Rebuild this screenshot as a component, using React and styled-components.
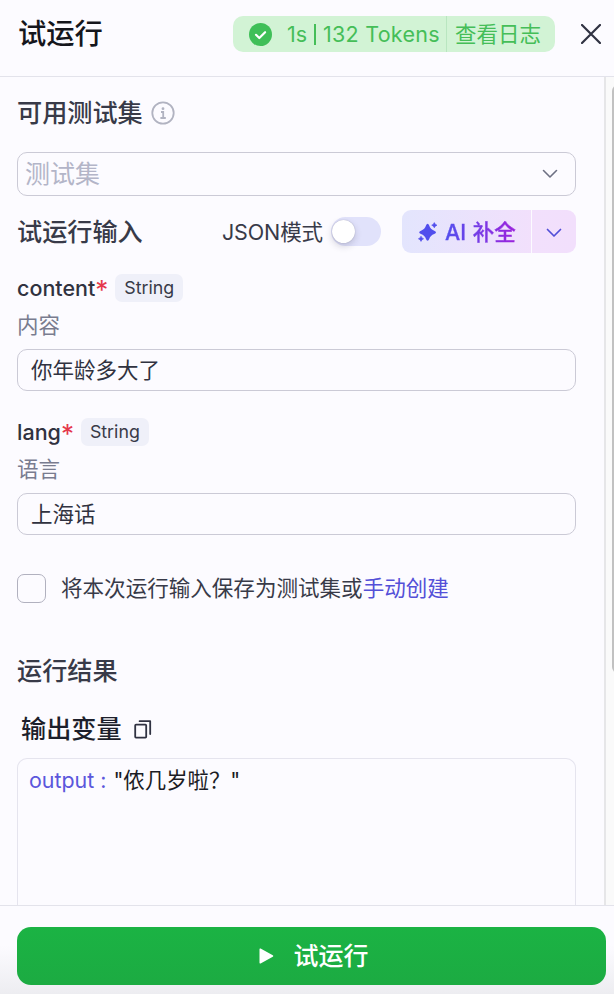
import React, { useState } from "react";
import styled, { createGlobalStyle } from "styled-components";

const GlobalStyle = createGlobalStyle`
  * {
    box-sizing: border-box;
  }
  body {
    margin: 0;
    background: #fcfbff;
    font-family: Inter, "Noto Sans CJK SC", sans-serif;
    color: #383a48;
  }
  button, input {
    font-family: inherit;
  }
`;

const Panel = styled.div`
  width: 614px;
  height: 994px;
  display: flex;
  flex-direction: column;
  overflow: hidden;
  background: #fcfbff;
`;

const Header = styled.header`
  height: 77px;
  flex-shrink: 0;
  display: flex;
  align-items: flex-start;
  padding: 16px 13px 0 18px;
  border-bottom: 1px solid #e3e3eb;
`;

const Title = styled.h1`
  margin: 0;
  flex: 1;
  font-size: 28.3px;
  line-height: 37px;
  font-weight: 500;
  color: #15161c;
`;

const Status = styled.div`
  width: 322px;
  height: 36px;
  display: flex;
  align-items: center;
  border-radius: 10px;
  background: #d2f3d5;
  color: #45be58;
  font-size: 21.5px;
  line-height: 36px;
  white-space: nowrap;
`;

const StatusInfo = styled.div`
  width: 214px;
  height: 36px;
  display: flex;
  align-items: center;
  padding-left: 16px;
  border-right: 1px solid #b9e6c0;
`;

const Duration = styled.span`
  margin-left: 15px;
`;

const Bar = styled.span`
  width: 2px;
  height: 21px;
  margin: 0 7px 0 7px;
  background: #45be58;
`;

const Tokens = styled.span`
  letter-spacing: 0.25px;
`;

const LogLink = styled.a`
  padding-left: 8px;
  cursor: pointer;
`;

const CloseButton = styled.button`
  display: flex;
  margin-left: 26px;
  padding: 8px 0 0;
  border: 0;
  background: none;
  cursor: pointer;
`;

const Body = styled.div`
  flex: 1;
  min-height: 0;
  display: flex;
`;

const Content = styled.main`
  flex: 1;
  display: flex;
  flex-direction: column;
  padding: 22px 28px 0 17px;
  overflow: hidden;
`;

const ScrollTrack = styled.div`
  width: 10px;
  padding: 8px 0 0 6px;
  border-left: 2px solid #e6e6e8;
  background: #fafafa;
  overflow: hidden;
`;

const ScrollThumb = styled.div`
  width: 12px;
  height: 588px;
  border-radius: 6px;
  background: #c1c1c1;
`;

const SectionTitle = styled.h2`
  display: flex;
  align-items: center;
  gap: ${(p) => p.$gap || 8}px;
  height: 28px;
  margin: ${(p) => p.$top || 0}px 0 0 ${(p) => p.$left || 0}px;
  flex-shrink: 0;
  font-size: 25.15px;
  line-height: 28px;
  font-weight: 500;
  color: ${(p) => p.$color || "#383a48"};
`;

const Select = styled.div`
  height: 44px;
  flex-shrink: 0;
  margin-top: 25px;
  padding: 0 17px 0 7px;
  display: flex;
  align-items: center;
  justify-content: space-between;
  border: 1px solid #cbcad6;
  border-radius: 10px;
  color: #b3b5c8;
  font-size: 25px;
  line-height: 41px;
`;

const InputBar = styled.div`
  height: 43px;
  flex-shrink: 0;
  margin-top: 14px;
  display: flex;
  align-items: center;
`;

const ModeLabel = styled.span`
  margin-left: auto;
  padding-bottom: 3px;
  font-size: 21.5px;
  letter-spacing: -0.1px;
`;

const Toggle = styled.button`
  width: 50px;
  height: 29px;
  margin: 0 21px 0 8px;
  padding: 0 2px 1px 1px;
  display: flex;
  align-items: center;
  justify-content: ${(p) => (p.$on ? "flex-end" : "flex-start")};
  border: 0;
  border-radius: 15px;
  background: ${(p) => (p.$on ? "#4d53e8" : "#e1e2fb")};
  cursor: pointer;
`;

const Knob = styled.span`
  width: 23px;
  height: 23px;
  border-radius: 50%;
  background: #fff;
  box-shadow: 0 3px 7px rgba(40, 40, 70, 0.2), 0 0 1px rgba(40, 40, 70, 0.4);
`;

const AiGroup = styled.div`
  width: 174px;
  height: 43px;
  display: flex;
  border-radius: 9px;
  background: linear-gradient(90deg, #e3e5fd 0%, #f2e0fc 75%, #f2dffc 100%);
`;

const AiButton = styled.button`
  width: 130px;
  display: flex;
  align-items: center;
  gap: 7px;
  padding: 0 0 0 16px;
  border: 0;
  border-right: 1px solid #fcfbff;
  background: none;
  cursor: pointer;
`;

const AiLabel = styled.span`
  font-size: 21.5px;
  font-weight: 500;
  line-height: 30px;
  word-spacing: 1px;
  white-space: nowrap;
  background: linear-gradient(90deg, #5450ee, #9b22dc);
  background-clip: text;
  color: transparent;
  -webkit-text-stroke: 0.3px transparent;
`;

const AiMore = styled.button`
  flex: 1;
  display: flex;
  align-items: center;
  justify-content: center;
  padding: 2px 1px 0 0;
  border: 0;
  background: none;
  cursor: pointer;
`;

const FieldHead = styled.div`
  height: 28px;
  flex-shrink: 0;
  margin-top: ${(p) => p.$top}px;
  display: flex;
  align-items: center;
`;

const FieldName = styled.label`
  font-size: 21.5px;
  line-height: 28px;
  font-weight: 500;
  color: #303240;
`;

const Required = styled.span`
  width: 12px;
  font-size: 26px;
  line-height: 28px;
  letter-spacing: -2px;
  padding-top: 3px;
  color: #e5384b;
`;

const TypeTag = styled.span`
  height: 28px;
  margin-left: 8px;
  padding: 0 9px;
  border-radius: 7px;
  background: #eff0f9;
  font-size: 17.8px;
  line-height: 27px;
`;

const FieldDesc = styled.div`
  height: 24px;
  flex-shrink: 0;
  margin-top: 11px;
  font-size: 21.5px;
  line-height: 24px;
  color: #797c8f;
`;

const TextInput = styled.input`
  width: 100%;
  height: 42px;
  flex-shrink: 0;
  margin-top: 12px;
  padding: 0 13px 3px;
  border: 1px solid #cbcad6;
  border-radius: 10px;
  outline: none;
  background: transparent;
  color: #303240;
  font-size: 21.5px;
`;

const SaveRow = styled.div`
  height: 29px;
  flex-shrink: 0;
  margin-top: 39px;
  display: flex;
  align-items: center;
  font-size: 21.55px;
  line-height: 26px;
  white-space: nowrap;
`;

const SaveText = styled.span`
  padding-bottom: 2px;
`;

const Checkbox = styled.input`
  appearance: none;
  width: 29px;
  height: 29px;
  margin: 0 15px 0 0;
  border: 1px solid #b1b1bf;
  border-radius: 7px;
  &:checked {
    background: #4d53e8;
  }
`;

const CreateLink = styled.a`
  color: #5450d8;
  cursor: pointer;
`;

const OutputBox = styled.div`
  flex: 1;
  margin-top: 15px;
  padding: 6px 11px;
  border: 1px solid #e5e4ee;
  border-bottom: 0;
  border-radius: 10px 10px 0 0;
  font-size: 21.4px;
  line-height: 30px;
  color: #1b1c24;
`;

const OutputKey = styled.span`
  margin-right: 7px;
  color: #5b57dc;
`;

const Footer = styled.footer`
  height: 89px;
  flex-shrink: 0;
  padding: 21px 8px 9px 17px;
  border-top: 1px solid #e3e3eb;
  background: linear-gradient(180deg, #fcfbff 45%, #ededf1 100%);
`;

const RunButton = styled.button`
  width: 100%;
  height: 58px;
  display: flex;
  align-items: center;
  justify-content: center;
  gap: 19px;
  padding: 0 0 0 5px;
  border: 0;
  border-radius: 14px;
  background: linear-gradient(180deg, #1bb344, #1cab42);
  color: #fff;
  font-size: 25px;
  line-height: 56px;
  font-weight: 500;
  cursor: pointer;
`;

const CheckIcon = () => (
  <svg width="23" height="23" viewBox="0 0 23 23">
    <circle cx="11.5" cy="11.5" r="11.5" fill="#3fbf58" />
    <path d="M7 11.8l3.3 3.2 5.8-5.8" fill="none" stroke="#fff" strokeWidth="2.2" strokeLinecap="round" strokeLinejoin="round" />
  </svg>
);

const CloseIcon = () => (
  <svg width="20" height="20" viewBox="0 0 20 20">
    <path d="M1 1l18 18M19 1L1 19" stroke="#303242" strokeWidth="2.2" strokeLinecap="round" />
  </svg>
);

const InfoIcon = () => (
  <svg width="24" height="24" viewBox="0 0 24 24" fill="none" stroke="#b1b3c1">
    <circle cx="12" cy="12" r="10.7" strokeWidth="1.8" />
    <circle cx="12" cy="7.7" r="1.4" fill="#b1b3c1" stroke="none" />
    <path d="M10 11h2.2v5.6M9.4 17h5.4" strokeWidth="1.8" />
  </svg>
);

const ChevronIcon = ({ color, width = 1.6 }) => (
  <svg width="16" height="10" viewBox="0 0 16 10">
    <path d="M1.5 1.5L8 8l6.5-6.5" fill="none" stroke={color} strokeWidth={width} strokeLinecap="round" strokeLinejoin="round" />
  </svg>
);

const SparkleIcon = () => (
  <svg width="20" height="20" viewBox="0 0 20 20" fill="#514eed">
    <path d="M9.6 1.8Q10.6 1.8 11.2 3.6Q12.4 7.4 16.2 8.8Q18 9.5 18 10.4Q18 11.3 16.2 12Q12.4 13.3 11.2 17.1Q10.6 18.8 9.6 18.8Q8.6 18.8 8 17.1Q6.8 13.3 3 12Q1.2 11.3 1.2 10.4Q1.2 9.5 3 8.8Q6.8 7.4 8 3.6Q8.6 1.8 9.6 1.8Z" />
    <path d="M16.3 .6Q16.9 2.6 19 3.2Q16.9 3.8 16.3 5.8Q15.7 3.8 13.7 3.2Q15.7 2.6 16.3 .6ZM3 14.2Q3.6 16.2 5.6 16.8Q3.6 17.4 3 19.4Q2.4 17.4 .4 16.8Q2.4 16.2 3 14.2Z" stroke="#514eed" strokeWidth="0.6" strokeLinejoin="round" />
  </svg>
);

const CopyIcon = () => (
  <svg width="18" height="19" viewBox="0 0 18 19" fill="none" stroke="#303242" strokeWidth="1.8" strokeLinejoin="round">
    <rect x="1.2" y="4.6" width="11" height="13" rx="0.8" />
    <path d="M5.6 1.2h10.6v12.8" strokeLinecap="round" />
  </svg>
);

const PlayIcon = () => (
  <svg width="15" height="16" viewBox="0 0 15 16" fill="#fff">
    <path d="M0.5 1.2Q.5 0 1.6.6L13.8 7.2Q15 8 13.8 8.8L1.6 15.4Q.5 16 .5 14.8Z" />
  </svg>
);

const fields = [
  { name: "content", desc: "内容", value: "你年龄多大了", top: 21 },
  { name: "lang", desc: "语言", value: "上海话", top: 27 },
];

const Field = ({ field }) => {
  const [value, setValue] = useState(field.value);

  return (
    <>
      <FieldHead $top={field.top}>
        <FieldName htmlFor={field.name}>{field.name}</FieldName>
        <Required>*</Required>
        <TypeTag>String</TypeTag>
      </FieldHead>
      <FieldDesc>{field.desc}</FieldDesc>
      <TextInput id={field.name} value={value} onChange={(e) => setValue(e.target.value)} />
    </>
  );
};

const App = () => {
  const [jsonMode, setJsonMode] = useState(false);

  return (
    <Panel>
      <GlobalStyle />
      <Header>
        <Title>试运行</Title>
        <Status>
          <StatusInfo>
            <CheckIcon />
            <Duration>1s</Duration>
            <Bar />
            <Tokens>132 Tokens</Tokens>
          </StatusInfo>
          <LogLink>查看日志</LogLink>
        </Status>
        <CloseButton type="button" aria-label="关闭">
          <CloseIcon />
        </CloseButton>
      </Header>
      <Body>
        <Content>
          <SectionTitle>
            可用测试集
            <InfoIcon />
          </SectionTitle>
          <Select>
            测试集
            <ChevronIcon color="#6d7083" />
          </Select>
          <InputBar>
            <SectionTitle>试运行输入</SectionTitle>
            <ModeLabel>JSON模式</ModeLabel>
            <Toggle type="button" $on={jsonMode} onClick={() => setJsonMode(!jsonMode)}>
              <Knob />
            </Toggle>
            <AiGroup>
              <AiButton type="button">
                <SparkleIcon />
                <AiLabel>AI 补全</AiLabel>
              </AiButton>
              <AiMore type="button">
                <ChevronIcon color="#514ed8" width={1.7} />
              </AiMore>
            </AiGroup>
          </InputBar>
          {fields.map((field) => (
            <Field key={field.name} field={field} />
          ))}
          <SaveRow>
            <Checkbox type="checkbox" />
            <SaveText>
              将本次运行输入保存为测试集或<CreateLink>手动创建</CreateLink>
            </SaveText>
          </SaveRow>
          <SectionTitle $top={54}>运行结果</SectionTitle>
          <SectionTitle $top={30} $left={4} $gap={12} $color="#1d1f2b">
            输出变量
            <CopyIcon />
          </SectionTitle>
          <OutputBox>
            <OutputKey>output :</OutputKey>
            <span>"侬几岁啦？"</span>
          </OutputBox>
        </Content>
        <ScrollTrack>
          <ScrollThumb />
        </ScrollTrack>
      </Body>
      <Footer>
        <RunButton type="button">
          <PlayIcon />
          试运行
        </RunButton>
      </Footer>
    </Panel>
  );
};

export default App;
